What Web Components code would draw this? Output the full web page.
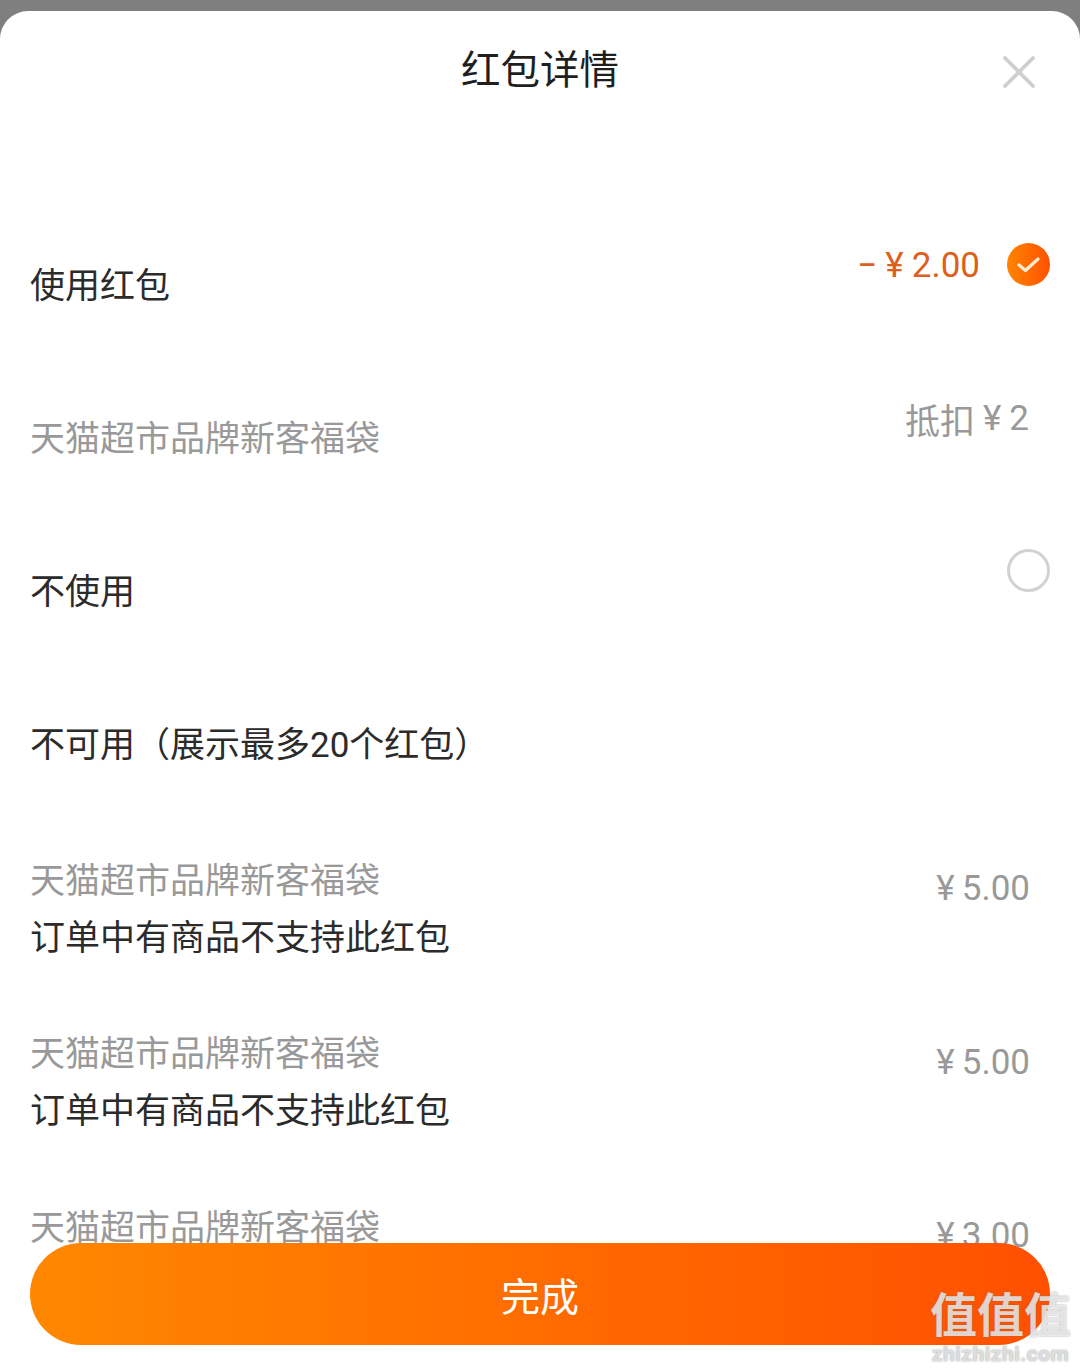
<!DOCTYPE html>
<html lang="zh">
<head>
<meta charset="utf-8">
<title>红包详情</title>
<style>
html, body { margin: 0; height: 100%; overflow: hidden; background: #7f7f7f; }
body { font-family: Roboto, "Noto Sans CJK SC", sans-serif; }
</style>
</head>
<body>
<packet-sheet>
    <span slot="title">红包详情</span>
    <packet-row top="40" label="使用红包" strong>
        <span slot="value" class="v">
            <packet-amount tone="orange" gap="8"><span>−</span><span>¥</span><span>2.00</span></packet-amount>
        </span>
        <packet-radio slot="radio" checked></packet-radio>
    </packet-row>
    <packet-row top="40" label="天猫超市品牌新客福袋">
        <packet-amount slot="value" pad="21" gap="8"><span>抵扣</span><span>¥</span><span>2</span></packet-amount>
    </packet-row>
    <packet-row top="40" label="不使用" strong>
        <packet-radio slot="radio"></packet-radio>
    </packet-row>
    <packet-row top="40" label="不可用（展示最多20个红包）" strong></packet-row>
    <packet-row top="22.5" height="173.5" label="天猫超市品牌新客福袋" note="订单中有商品不支持此红包">
        <packet-amount slot="value" pad="20" gap="7" drop="29"><span>¥</span><span>5.00</span></packet-amount>
    </packet-row>
    <packet-row top="22.5" height="173.5" label="天猫超市品牌新客福袋" note="订单中有商品不支持此红包">
        <packet-amount slot="value" pad="20" gap="7" drop="29"><span>¥</span><span>5.00</span></packet-amount>
    </packet-row>
    <packet-row top="22.5" height="173.5" label="天猫超市品牌新客福袋">
        <packet-amount slot="value" pad="20" gap="7" drop="29"><span>¥</span><span>3.00</span></packet-amount>
    </packet-row>
    <packet-button slot="footer">完成</packet-button>
    <site-mark slot="mark"></site-mark>
</packet-sheet>

<script>
class PacketSheet extends HTMLElement {
    constructor() {
        super();
        this.attachShadow({ mode: "open" }).innerHTML = `
        <style>
        :host { display: block; height: 100vh; padding-top: 11px; box-sizing: border-box; }
        .sheet { position: relative; height: 100%; background: #fff; border-radius: 28px 28px 0 0; overflow: hidden; display: flex; flex-direction: column; }
        header { height: 116px; flex: none; display: flex; justify-content: center; align-items: center; font-size: 39.5px; color: #1f1f1f; position: relative; padding-bottom: 5px; box-sizing: border-box; }
        svg { position: absolute; right: 45px; top: 45px; }
        main { flex: 1; padding-top: 91px; overflow: hidden; }
        .footer { position: absolute; left: 30px; right: 30px; top: 1232px; }
        .mark { position: absolute; right: 9px; bottom: 6px; }
        </style>
        <section class="sheet">
            <header>
                <slot name="title"></slot>
                <svg width="32" height="32" viewBox="0 0 32 32"><path d="M2 2 L30 30 M30 2 L2 30" stroke="#cfcfcf" stroke-width="3.8" stroke-linecap="round"/></svg>
            </header>
            <main><slot></slot></main>
            <div class="footer"><slot name="footer"></slot></div>
            <div class="mark"><slot name="mark"></slot></div>
        </section>`;
    }
}

class PacketRow extends HTMLElement {
    constructor() {
        super();
        this.attachShadow({ mode: "open" }).innerHTML = `
        <style>
        :host { display: grid; grid-template-columns: 1fr auto; box-sizing: border-box; height: 153px; padding: 0 30px 0 30px; font-size: 35px; }
        .left { line-height: 57px; }
        .label { color: #999; white-space: nowrap; }
        :host([strong]) .label, .note { color: #2b2b2b; }
        .right { display: flex; align-items: flex-start; margin-top: -15px; }
        ::slotted(packet-radio) { margin-left: 27px; }
        </style>
        <div class="left"><div class="label"></div><div class="note"></div></div>
        <div class="right"><slot name="value"></slot><slot name="radio"></slot></div>`;
    }
    connectedCallback() {
        this.shadowRoot.querySelector(".label").textContent = this.getAttribute("label");
        this.shadowRoot.querySelector(".note").textContent = this.getAttribute("note") || "";
        this.style.paddingTop = this.getAttribute("top") + "px";
        if (this.hasAttribute("height")) this.style.height = this.getAttribute("height") + "px";
    }
}

class PacketAmount extends HTMLElement {
    constructor() {
        super();
        this.attachShadow({ mode: "open" }).innerHTML = `
        <style>
        :host { display: inline-flex; align-items: center; height: 44px; color: #999; font-size: 35px; white-space: nowrap; }
        :host([tone="orange"]) { color: #dc6020; }
        </style>
        <slot></slot>`;
    }
    connectedCallback() {
        this.style.gap = this.getAttribute("gap") + "px";
        if (this.hasAttribute("pad")) this.style.paddingRight = this.getAttribute("pad") + "px";
        if (this.hasAttribute("drop")) this.style.marginTop = this.getAttribute("drop") + "px";
    }
}

class PacketRadio extends HTMLElement {
    constructor() {
        super();
        this.attachShadow({ mode: "open" }).innerHTML = `
        <style>
        :host { display: block; width: 43px; height: 43px; box-sizing: border-box; border-radius: 50%; border: 3px solid #d2d2d2; }
        :host([checked]) { border: 0; background: linear-gradient(90deg, #ff8500, #ff5000); }
        svg { display: none; }
        :host([checked]) svg { display: block; }
        </style>
        <svg width="43" height="43" viewBox="0 0 43 43"><path d="M12 22 L18.5 27.5 L31 16" fill="none" stroke="#ffeccf" stroke-width="3.2" stroke-linecap="round" stroke-linejoin="round"/></svg>`;
    }
}

class PacketButton extends HTMLElement {
    constructor() {
        super();
        this.attachShadow({ mode: "open" }).innerHTML = `
        <style>
        :host { display: flex; align-items: center; justify-content: center; height: 102px; border-radius: 51px; background: linear-gradient(90deg, #ff8800, #ff5000); color: #fff; font-size: 39px; padding-bottom: 1px; box-sizing: border-box; }
        </style>
        <slot></slot>`;
    }
}

class SiteMark extends HTMLElement {
    constructor() {
        super();
        this.attachShadow({ mode: "open" }).innerHTML = `
        <style>
        :host { display: flex; flex-direction: column; align-items: center; gap: 4px; color: rgba(255,255,255,.72); text-shadow: 0 0 2px rgba(110,110,110,.7); }
        .big { font-size: 47px; line-height: 48px; font-weight: 700; letter-spacing: 0; }
        .small { font-size: 21px; line-height: 20px; font-weight: 700; letter-spacing: .5px; color: rgba(225,225,225,.95); }
        </style>
        <div class="big">值值值</div>
        <div class="small">zhizhizhi.com</div>`;
    }
}

customElements.define("packet-sheet", PacketSheet);
customElements.define("packet-row", PacketRow);
customElements.define("packet-amount", PacketAmount);
customElements.define("packet-radio", PacketRadio);
customElements.define("packet-button", PacketButton);
customElements.define("site-mark", SiteMark);
</script>
</body>
</html>
